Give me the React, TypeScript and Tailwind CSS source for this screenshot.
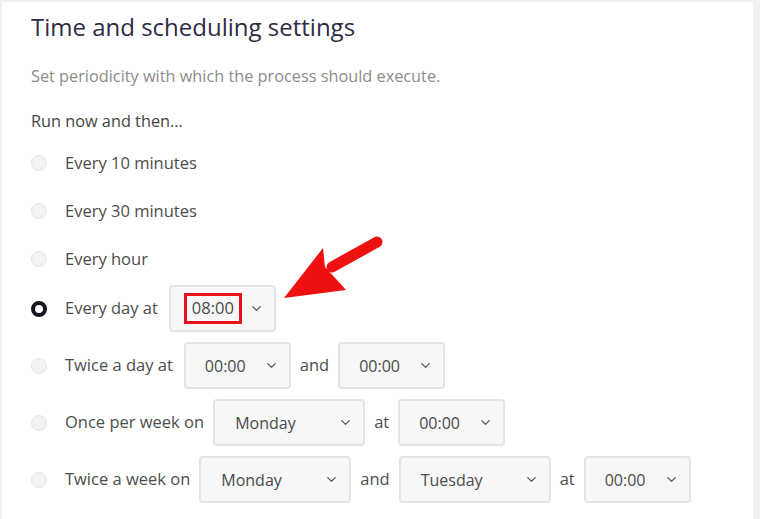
import { ChevronDown } from "lucide-react";

const font = { fontFamily: "'Open Sans', 'Noto Sans', sans-serif" };

function Radio({ checked }: { checked?: boolean }) {
  if (checked) {
    return <span className="w-4 h-4 rounded-full border-[4px] border-[#16141f] bg-white shrink-0" />;
  }
  return <span className="w-4 h-4 rounded-full border border-[#e6e6e8] bg-[#f3f3f4] shrink-0" />;
}

function Select({ value, wide, marked }: { value: string; wide?: boolean; marked?: boolean }) {
  return (
    <div
      className={`flex items-center justify-between h-[47px] rounded-[4px] border-2 border-[#e4e4e6] bg-[#f7f7f8] pr-[10px] ${
        wide ? "w-[152px] pl-[20px]" : "w-[107px] pl-[19px]"
      }`}
    >
      {marked ? (
        <span className="-ml-[6px] border-[3px] border-[#e8101a] px-[5px] h-[31px] flex items-center text-[16.5px] text-[#4a4a4a]">
          {value}
        </span>
      ) : (
        <span className="text-[16px] text-[#4a4a4a]">{value}</span>
      )}
      <ChevronDown size={15} strokeWidth={2} className="text-[#555]" />
    </div>
  );
}

function Row({ children, checked }: { children: React.ReactNode; checked?: boolean }) {
  return (
    <div className="flex items-center">
      <span className="w-[34px] flex">
        <Radio checked={checked} />
      </span>
      <div className="flex items-center gap-[9px] text-[16.5px] text-[#4d4d4d]">{children}</div>
    </div>
  );
}

export default function App() {
  return (
    <div className="w-[760px] h-[519px] bg-[#f1f1f3] pt-[2px] pl-[2px] pr-[7px] overflow-hidden" style={font}>
      <div className="relative h-full bg-white pl-[29px] pt-[9px]">
        <h2 className="text-[24px] leading-[32px] text-[#2f2b45]">Time and scheduling settings</h2>
        <p className="mt-[22px] text-[16.3px] leading-[22px] text-[#8c8c8c]">
          Set periodicity with which the process should execute.
        </p>
        <p className="mt-[23px] text-[16.3px] leading-[22px] text-[#444]">Run now and then...</p>

        <div className="mt-[7px] flex flex-col">
          <div className="h-12 flex items-center">
            <Row>Every 10 minutes</Row>
          </div>
          <div className="h-12 flex items-center">
            <Row>Every 30 minutes</Row>
          </div>
          <div className="h-12 flex items-center">
            <Row>Every hour</Row>
          </div>
          <div className="mt-[2px]">
            <Row checked>
              <span className="mr-[2px]">Every day at</span>
              <Select value="08:00" marked />
            </Row>
          </div>
          <div className="mt-[10px]">
            <Row>
              <span className="mr-[2px]">Twice a day at</span>
              <Select value="00:00" />
              <span>and</span>
              <Select value="00:00" />
            </Row>
          </div>
          <div className="mt-[10px]">
            <Row>
              <span>Once per week on</span>
              <Select value="Monday" wide />
              <span>at</span>
              <Select value="00:00" />
            </Row>
          </div>
          <div className="mt-[10px]">
            <Row>
              <span>Twice a week on</span>
              <Select value="Monday" wide />
              <span>and</span>
              <Select value="Tuesday" wide />
              <span>at</span>
              <Select value="00:00" />
            </Row>
          </div>
        </div>

        <svg className="absolute left-0 top-0 pointer-events-none" width="751" height="517" viewBox="0 0 751 517">
          <line x1="375" y1="240" x2="330" y2="265" stroke="#ee1111" strokeWidth="11" strokeLinecap="round" />
          <polygon points="282,296 321,246 323,265 335,278 344,288" fill="#ee1111" />
        </svg>
      </div>
    </div>
  );
}
